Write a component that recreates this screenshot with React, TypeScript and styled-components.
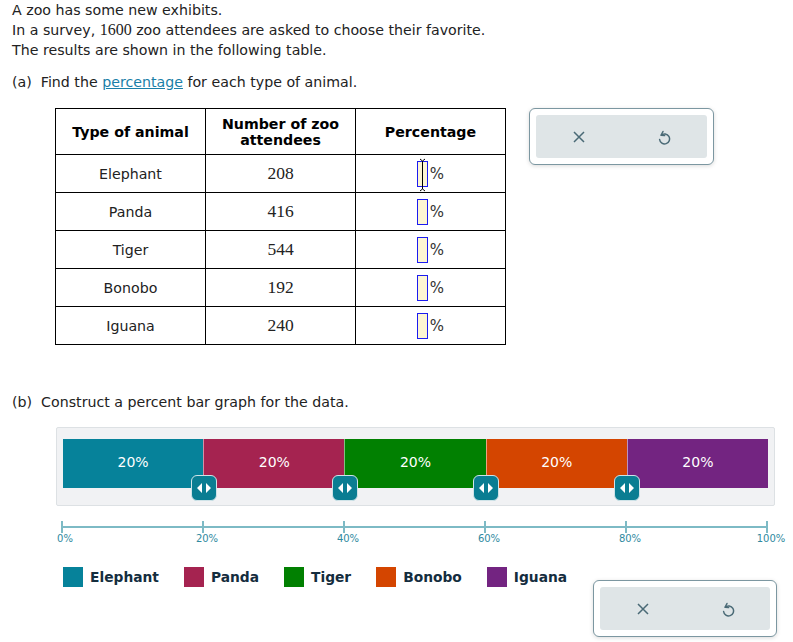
import React from "react";
import styled, { createGlobalStyle } from "styled-components";

const GlobalStyle = createGlobalStyle`
	body {
		margin: 0;
		background: #fff;
		font-family: "DejaVu Sans", Verdana, sans-serif;
		font-size: 14.2px;
		color: #222;
	}
`;

const Page = styled.div`
	width: 793px;
	height: 642px;
	padding: 0 0 0 12px;
	box-sizing: border-box;
	overflow: hidden;
`;

const Line = styled.div`
	line-height: 20px;
`;

const Part = styled.div<{ top?: number }>`
	line-height: 20px;
	margin-top: ${(props) => props.top || 0}px;
`;

const Serif = styled.span<{ size?: number }>`
	font-family: "Liberation Serif", "Times New Roman", serif;
	font-size: ${(props) => props.size || 16}px;
`;

const Link = styled.span`
	color: #1a7fa8;
	text-decoration: underline;
`;

const TopRow = styled.div`
	display: flex;
	align-items: flex-start;
	margin-top: 16px;
	margin-left: 43px;
	gap: 23px;
`;

const Table = styled.table`
	border-collapse: collapse;
	border: 1px solid #000;
	td,
	th {
		border: 1px solid #000;
		text-align: center;
		width: 149px;
		padding: 0;
	}
	th {
		height: 45px;
		font-weight: bold;
		color: #000;
		line-height: 16px;
	}
	td {
		height: 37px;
	}
`;

const PctCell = styled.div`
	display: flex;
	justify-content: center;
	align-items: center;
`;

const InputBox = styled.div`
	position: relative;
	width: 9px;
	height: 24px;
	border: 1px solid #1c1cf0;
	background: #fdf6d3;
`;

const Caret = styled.svg`
	position: absolute;
	left: -1px;
	top: -4px;
`;

const Pct = styled.span`
	font-size: 15px;
	color: #333;
	margin-left: 2px;
`;

const ButtonFrame = styled.div<{ w: number; top?: number }>`
	flex-shrink: 0;
	width: ${(props) => props.w}px;
	margin-top: ${(props) => props.top || 0}px;
	box-sizing: border-box;
	padding: 6px;
	border: 1px solid #7c97a1;
	border-radius: 6px;
	background: #fff;
	box-shadow: 0 1px 4px rgba(0, 0, 0, 0.15);
`;

const ButtonInner = styled.div`
	display: flex;
	justify-content: space-around;
	align-items: center;
	height: 43px;
	background: #dfe5e7;
	border-radius: 3px;
`;

const IconBtn = styled.div`
	display: flex;
	align-items: center;
	justify-content: center;
	width: 40px;
	color: #4a6a76;
`;

const GraphBox = styled.div`
	margin: 15px 0 0 44px;
	width: 719px;
	height: 79px;
	box-sizing: border-box;
	padding: 11px 6px 0 6px;
	background: #f1f2f4;
	border: 1px solid #dde1e4;
	border-radius: 2px;
`;

const Bar = styled.div`
	position: relative;
	display: flex;
	height: 49px;
`;

const Segment = styled.div<{ color: string }>`
	flex: 1;
	background: ${(props) => props.color};
	color: #fff;
	font-size: 14px;
	display: flex;
	justify-content: center;
	padding-top: 15px;
	box-sizing: border-box;
	border-left: 1px solid rgba(255, 255, 255, 0.5);
	&:first-child {
		border-left: none;
	}
`;

const Handle = styled.div`
	position: absolute;
	top: 36px;
	width: 26px;
	height: 26px;
	margin-left: -13px;
	box-sizing: border-box;
	background: #0a7d92;
	border: 1px solid #cfe3e8;
	border-radius: 6px;
	display: flex;
	align-items: center;
	justify-content: center;
`;

const AxisWrap = styled.div`
	margin: 15px 0 0 40px;
	svg {
		display: block;
	}
`;

const Bottom = styled.div`
	display: flex;
	align-items: flex-start;
	margin: 20px 0 0 51px;
	width: 714px;
`;

const Legend = styled.div`
	flex: 1;
	min-width: 0;
	display: flex;
	align-items: center;
`;

const LegendItem = styled.div`
	display: flex;
	align-items: center;
	gap: 7px;
	margin-right: 25px;
	font-weight: bold;
	font-size: 13.8px;
	color: #142d3e;
	white-space: nowrap;
`;

const Swatch = styled.div<{ color: string }>`
	width: 20px;
	height: 20px;
	background: ${(props) => props.color};
`;

const rows = [
	["Elephant", "208"],
	["Panda", "416"],
	["Tiger", "544"],
	["Bonobo", "192"],
	["Iguana", "240"],
];

const colors = ["#06829a", "#a52350", "#018001", "#d44500", "#732481"];
const names = ["Elephant", "Panda", "Tiger", "Bonobo", "Iguana"];

function XIcon() {
	return (
		<svg width="14" height="14" viewBox="0 0 14 14">
			<path d="M2 2 L12 12 M12 2 L2 12" stroke="currentColor" strokeWidth="1.5" fill="none" />
		</svg>
	);
}

function UndoIcon() {
	return (
		<svg width="14" height="16" viewBox="0 0 14 16">
			<path
				d="M4.2 6.2 A5 5 0 1 1 2.6 10.5"
				stroke="currentColor"
				strokeWidth="1.5"
				fill="none"
				strokeLinecap="round"
			/>
			<path
				d="M6 2.5 L4.2 6.2 L7.6 6.6"
				stroke="currentColor"
				strokeWidth="1.5"
				fill="none"
				strokeLinecap="round"
				strokeLinejoin="round"
			/>
		</svg>
	);
}

function Buttons() {
	return (
		<ButtonInner>
			<IconBtn>
				<XIcon />
			</IconBtn>
			<IconBtn>
				<UndoIcon />
			</IconBtn>
		</ButtonInner>
	);
}

function Axes() {
	const w = 705;
	const x0 = 10;
	return (
		<svg width={740} height={26}>
			<line x1={x0} y1={6} x2={x0 + w} y2={6} stroke="#7dbac5" strokeWidth="2" />
			{[0, 1, 2, 3, 4, 5].map((i) => {
				const x = x0 + (w * i) / 5;
				return (
					<g key={i}>
						<line x1={x} y1={0} x2={x} y2={12} stroke="#7dbac5" strokeWidth="2" />
						<text
							x={i === 0 ? x - 5 : x + 4}
							y={21}
							fontSize="10"
							fill="#2f8aa0"
							textAnchor={i === 0 ? "start" : "middle"}
							fontFamily="DejaVu Sans, sans-serif"
						>
							{i * 20}%
						</text>
					</g>
				);
			})}
		</svg>
	);
}

export default function App() {
	return (
		<Page>
			<GlobalStyle />
			<Line>A zoo has some new exhibits.</Line>
			<Line>
				In a survey, <Serif>1600</Serif> zoo attendees are asked to choose their favorite.
			</Line>
			<Line>The results are shown in the following table.</Line>
			<Part top={12}>
				(a)&nbsp; Find the <Link>percentage</Link> for each type of animal.
			</Part>
			<TopRow>
				<Table>
					<thead>
						<tr>
							<th>Type of animal</th>
							<th>
								Number of zoo
								<br />
								attendees
							</th>
							<th>Percentage</th>
						</tr>
					</thead>
					<tbody>
						{rows.map(([name, n], i) => (
							<tr key={name}>
								<td>{name}</td>
								<td>
									<Serif size={17.5}>{n}</Serif>
								</td>
								<td>
									<PctCell>
										<InputBox>
											{i === 0 && (
												<Caret width="11" height="34" viewBox="0 0 11 34">
													<path
														d="M3 1 L5.5 3 L8 1 M5.5 3 V31 M3 33 L5.5 31 L8 33"
														stroke="#000"
														strokeWidth="1"
														fill="none"
													/>
												</Caret>
											)}
										</InputBox>
										<Pct>%</Pct>
									</PctCell>
								</td>
							</tr>
						))}
					</tbody>
				</Table>
				<ButtonFrame w={185}>
					<Buttons />
				</ButtonFrame>
			</TopRow>
			<Part top={47}>(b)&nbsp; Construct a percent bar graph for the data.</Part>
			<GraphBox>
				<Bar>
					{colors.map((c) => (
						<Segment key={c} color={c}>
							20%
						</Segment>
					))}
					{[20, 40, 60, 80].map((p) => (
						<Handle key={p} style={{ left: `${p}%` }}>
							<svg width="16" height="10" viewBox="0 0 16 10">
								<path d="M6 0 L1 5 L6 10 Z M10 0 L15 5 L10 10 Z" fill="#fff" />
							</svg>
						</Handle>
					))}
				</Bar>
			</GraphBox>
			<AxisWrap>
				<Axes />
			</AxisWrap>
			<Bottom>
				<Legend>
					{names.map((n, i) => (
						<LegendItem key={n}>
							<Swatch color={colors[i]} />
							{n}
						</LegendItem>
					))}
				</Legend>
				<ButtonFrame w={184} top={13}>
					<Buttons />
				</ButtonFrame>
			</Bottom>
		</Page>
	);
}
